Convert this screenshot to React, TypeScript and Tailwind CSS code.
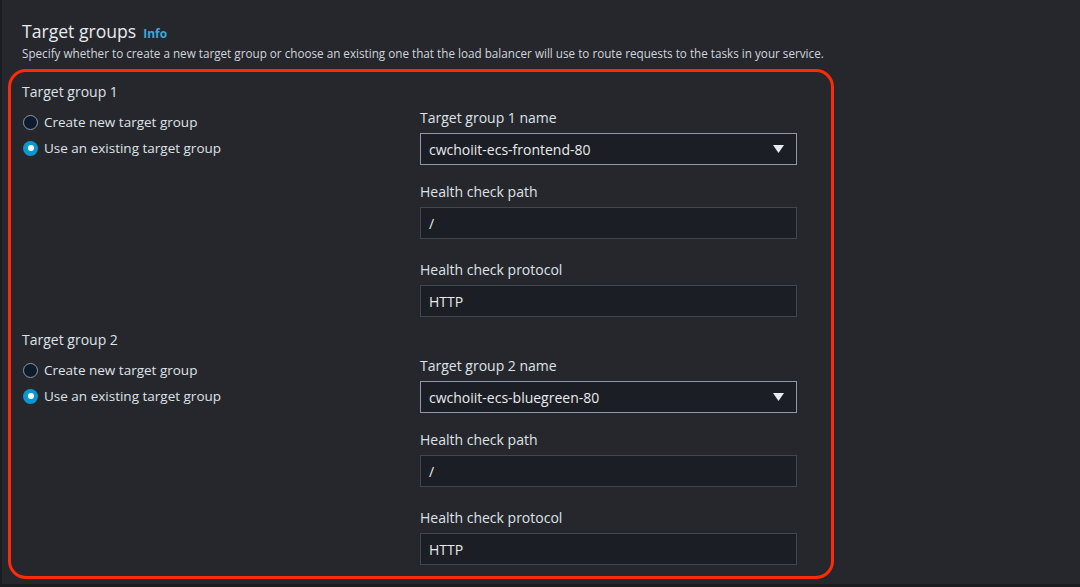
import { ReactNode } from 'react';

const font = { fontFamily: '"Open Sans", "Noto Sans", Arial, sans-serif' };

function Radio({ checked, label }: { checked?: boolean; label: string }) {
  return (
    <div className="flex h-[26px] items-center gap-[6px]">
      {checked ? (
        <span className="flex h-[15px] w-[15px] items-center justify-center rounded-full bg-[#0a98d3]">
          <span className="h-[6px] w-[6px] rounded-full bg-white" />
        </span>
      ) : (
        <span className="h-[15px] w-[15px] rounded-full border-[1.5px] border-[#8d99a8] bg-[#0f1b2a]" />
      )}
      <span className="text-[13.5px] text-[#dfe2e6]">{label}</span>
    </div>
  );
}

function Field({ label, children, className }: { label: string; children: ReactNode; className?: string }) {
  return (
    <div className={className}>
      <div className="h-[20px] text-[14px] leading-[20px] text-[#dfe2e6]">{label}</div>
      <div className="mt-[5px]">{children}</div>
    </div>
  );
}

function TextBox({ value }: { value: string }) {
  return (
    <div className="flex h-[32px] items-center border border-[#414750] bg-[#1b1e24] px-[8px] text-[14px] text-[#e9ebed]">
      {value}
    </div>
  );
}

function SelectBox({ value }: { value: string }) {
  return (
    <div className="flex h-[32px] items-center justify-between border border-[#8d99a8] bg-[#1b1e24] pl-[8px] pr-[12px] text-[14px] text-[#e9ebed]">
      <span>{value}</span>
      <svg width="11" height="8" viewBox="0 0 11 8">
        <path d="M0 0 H11 L5.5 8 Z" fill="#e9ebed" />
      </svg>
    </div>
  );
}

function TargetGroup({ n, name }: { n: number; name: string }) {
  return (
    <div className="flex">
      <div className="w-[398px]">
        <div className="h-[20px] text-[14px] leading-[20px] text-[#dfe2e6]">Target group {n}</div>
        <div className="mt-[7px] pl-[1px]">
          <Radio label="Create new target group" />
          <Radio checked label="Use an existing target group" />
        </div>
      </div>
      <div className="w-[377px] pt-[26px]">
        <Field label={`Target group ${n} name`}>
          <SelectBox value={name} />
        </Field>
        <Field label="Health check path" className="mt-[17px]">
          <TextBox value="/" />
        </Field>
        <Field label="Health check protocol" className="mt-[21px]">
          <TextBox value="HTTP" />
        </Field>
      </div>
    </div>
  );
}

export default function App() {
  return (
    <div
      className="h-[587px] w-[1080px] overflow-hidden border-b-[3px] border-l-2 border-[#1a1c20] bg-[#25272d] pl-[6px]"
      style={font}
    >
      <div className="pl-[14px] pt-[19px]">
        <div className="flex items-baseline gap-[7px]">
          <h1 className="text-[17.6px] leading-[24px] text-[#e9ebed]">Target groups</h1>
          <span className="text-[12px] font-bold text-[#3aa8dc]">Info</span>
        </div>
        <p className="mt-[2px] text-[11.7px] leading-[16px] text-[#d1d5db]">
          Specify whether to create a new target group or choose an existing one that the load balancer will use to route requests to the tasks in your service.
        </p>
      </div>
      <div className="mt-[8px] w-[826px] rounded-[18px] border-[3px] border-[#ff2a0a] pb-[11px] pl-[11px] pt-[10px]">
        <TargetGroup n={1} name="cwchoiit-ecs-frontend-80" />
        <div className="mt-[13px]">
          <TargetGroup n={2} name="cwchoiit-ecs-bluegreen-80" />
        </div>
      </div>
    </div>
  );
}
